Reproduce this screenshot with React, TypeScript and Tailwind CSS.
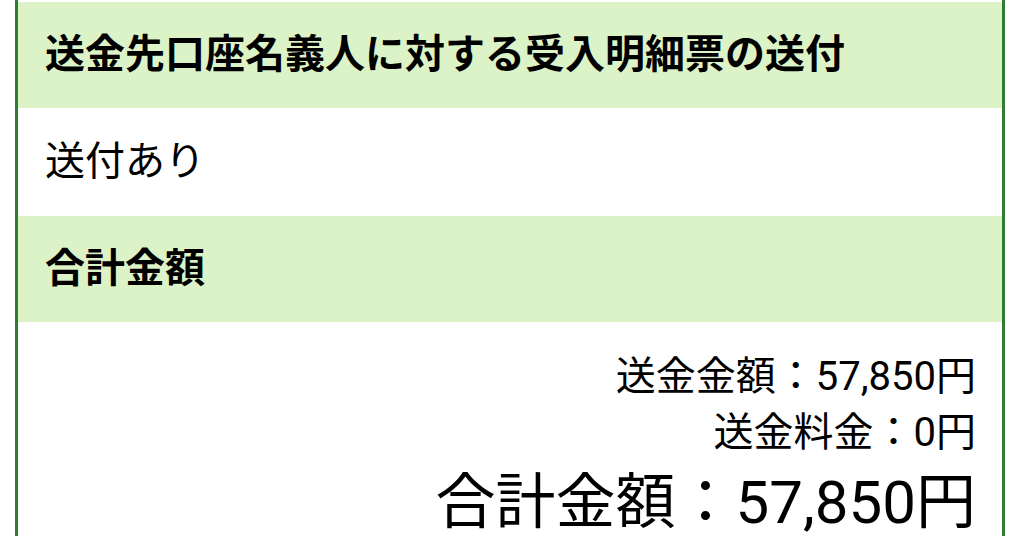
const FONT = { fontFamily: 'Roboto, "Noto Sans CJK JP", sans-serif' }

function SectionHeader({ children }: { children: React.ReactNode }) {
  return (
    <div className="bg-[#dcf3c8] px-[27px] py-[25px] text-[40px] font-bold leading-[56px] text-black">
      {children}
    </div>
  )
}

export default function App() {
  return (
    <div className="h-[536px] overflow-hidden bg-white" style={FONT}>
      <div className="ml-[15px] w-[990px] border-x-[3px] border-[#2e7d32] bg-white pt-[2px]">
        <SectionHeader>送金先口座名義人に対する受入明細票の送付</SectionHeader>
        <div className="px-[27px] py-[26px] text-[40px] leading-[56px] text-black">送付あり</div>
        <SectionHeader>合計金額</SectionHeader>
        <div className="flex flex-col items-end px-[26px] pt-[27px] text-black">
          <div className="text-[40px] leading-[56px]">送金金額：57,850円</div>
          <div className="text-[40px] leading-[56px]">送金料金：0円</div>
          <div className="text-[60px] leading-[84px]">合計金額：57,850円</div>
        </div>
      </div>
    </div>
  )
}
